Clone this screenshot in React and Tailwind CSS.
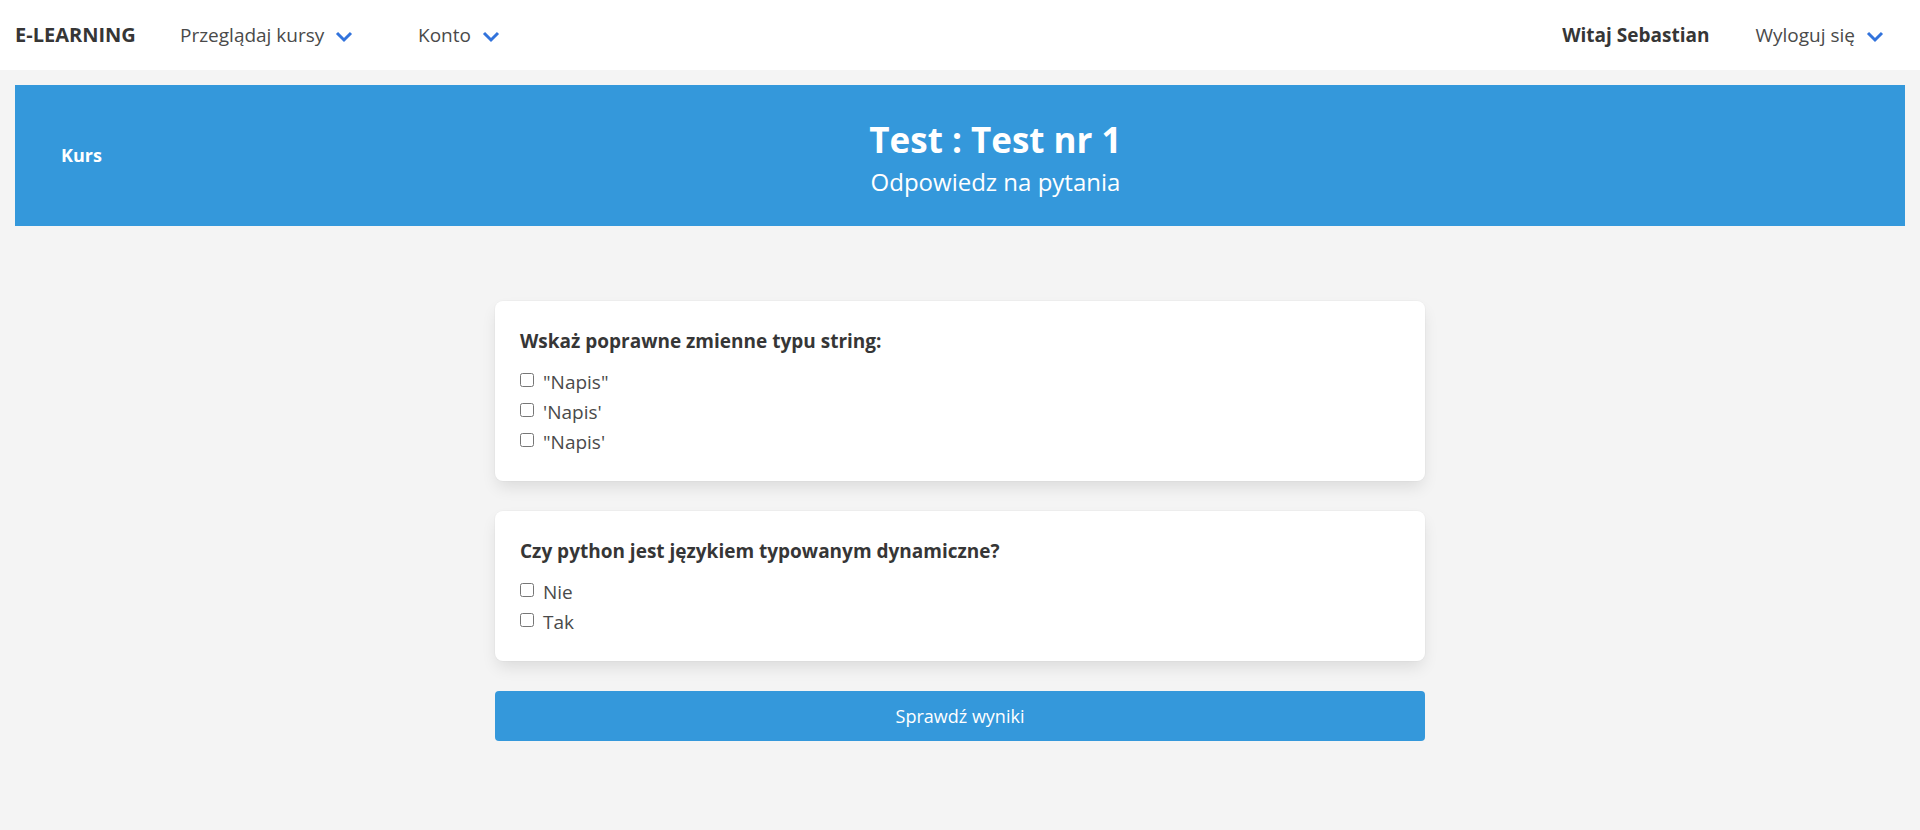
import React from "react";

function Chevron() {
  return (
    <svg width="18" height="12" viewBox="0 0 18 12" className="ml-[11px] mt-[4px] shrink-0">
      <path d="M2 2 L9 9 L16 2" fill="none" stroke="#3273dc" strokeWidth="3" strokeLinecap="butt" strokeLinejoin="miter" />
    </svg>
  );
}

function Option({ label }) {
  return (
    <label className="h-[30px] flex items-center">
      <input type="checkbox" className="w-[14px] h-[14px] m-0 shrink-0" />
      <span className="ml-[9px] pt-[3px] text-[19px] leading-[30px] text-[#4a4a4a]">{label}</span>
    </label>
  );
}

function Card({ question, options }) {
  return (
    <div className="bg-white rounded-[8px] pt-[26px] px-[25px] pb-[26px] shadow-[0_8px_16px_-2px_rgba(10,10,10,0.1),0_0_0_1px_rgba(10,10,10,0.02)]">
      <div className="text-[19px] font-bold text-[#363636] leading-[29px] h-[29px]">{question}</div>
      <div className="mt-[9px] flex flex-col">
        {options.map((o, i) => (
          <Option key={i} label={o} />
        ))}
      </div>
    </div>
  );
}

export default function App() {
  return (
    <div className="min-h-screen bg-[#f4f4f4] font-['Open_Sans','Noto_Sans',sans-serif] pb-[40px]">
      <nav className="h-[70px] bg-white flex items-center justify-between text-[19px] text-[#4a4a4a]">
        <div className="flex items-center">
          <span className="ml-[15px] w-[165px] text-[20px] font-bold text-[#363636]">E-LEARNING</span>
          <div className="w-[238px] flex items-center">
            <span>Przeglądaj kursy</span>
            <Chevron />
          </div>
          <div className="flex items-center">
            <span>Konto</span>
            <Chevron />
          </div>
        </div>
        <div className="flex items-center mr-[36px]">
          <span className="font-bold text-[#363636]">Witaj Sebastian</span>
          <span className="ml-[46px]">Wyloguj się</span>
          <Chevron />
        </div>
      </nav>

      <div className="mx-[15px] mt-[15px] h-[141px] bg-[#3498db] flex items-center text-white">
        <div className="pl-[46px] text-[18px] font-bold">Kurs</div>
        <div className="flex-1 text-center pr-[16px] pt-[5px]">
          <div className="text-[35px] font-bold leading-[40px]">Test : Test nr 1</div>
          <div className="text-[24px] leading-[30px] mt-[7px]">Odpowiedz na pytania</div>
        </div>
      </div>

      <div className="w-[930px] mx-auto mt-[75px] flex flex-col gap-[30px]">
        <Card
          question="Wskaż poprawne zmienne typu string:"
          options={['"Napis"', "'Napis'", "\"Napis'"]}
        />
        <Card
          question="Czy python jest językiem typowanym dynamiczne?"
          options={["Nie", "Tak"]}
        />
        <button className="w-full h-[50px] bg-[#3498db] rounded-[4px] text-white text-[18px]">
          Sprawdź wyniki
        </button>
      </div>
    </div>
  );
}
